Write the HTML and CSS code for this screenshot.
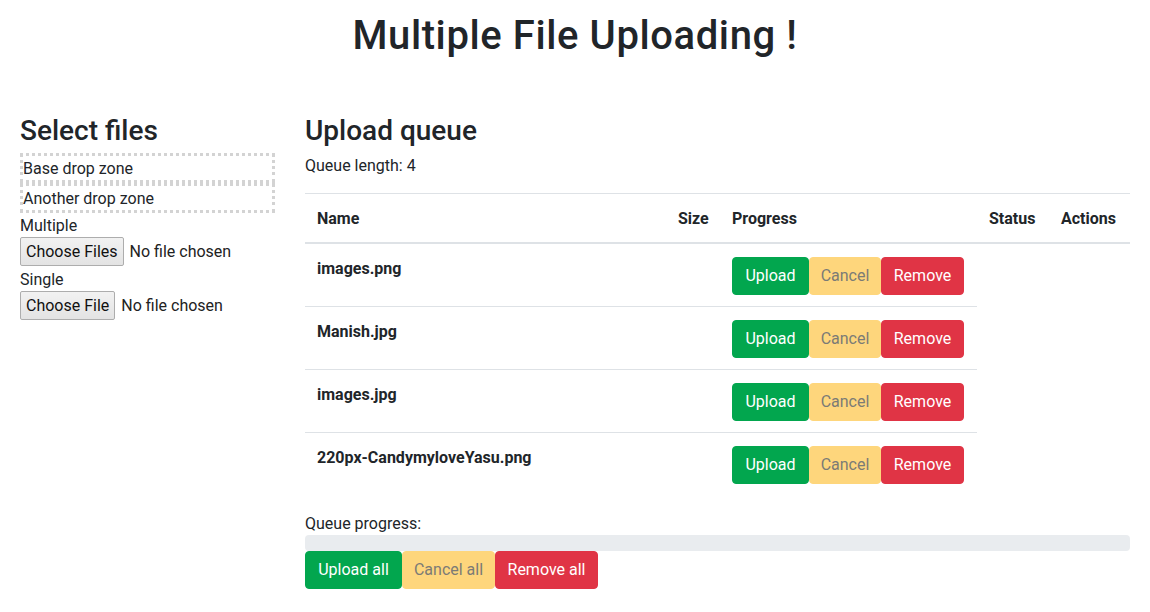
FILE: index.html
```html
<!DOCTYPE html>
<html lang="en">
<head>
<meta charset="utf-8">
<title>Multiple File Uploading</title>
<link rel="stylesheet" href="styles.css">
</head>
<body>
<div class="page">
  <h1 class="title">Multiple File Uploading !</h1>
  <div class="main">
    <section class="sidebar">
      <h3 class="section-title">Select files</h3>
      <div class="drop-zone">Base drop zone</div>
      <div class="drop-zone">Another drop zone</div>
      <div class="field-label">Multiple</div>
      <input type="file" multiple class="file-input">
      <div class="field-label">Single</div>
      <input type="file" class="file-input">
    </section>
    <section class="queue">
      <h3 class="section-title">Upload queue</h3>
      <p class="queue-length">Queue length: 4</p>
      <table class="queue-table">
        <colgroup>
          <col class="col-name">
          <col class="col-size">
          <col class="col-progress">
          <col class="col-status">
          <col class="col-actions">
        </colgroup>
        <thead>
          <tr>
            <th>Name</th>
            <th>Size</th>
            <th>Progress</th>
            <th>Status</th>
            <th>Actions</th>
          </tr>
        </thead>
        <tbody>
          <tr>
            <td class="file-name">images.png</td>
            <td></td>
            <td class="nowrap"><div class="btn-row"><button class="btn btn-success w-upload">Upload</button><button class="btn btn-warning w-cancel" disabled>Cancel</button><button class="btn btn-danger w-remove">Remove</button></div></td>
          </tr>
          <tr>
            <td class="file-name">Manish.jpg</td>
            <td></td>
            <td class="nowrap"><div class="btn-row"><button class="btn btn-success w-upload">Upload</button><button class="btn btn-warning w-cancel" disabled>Cancel</button><button class="btn btn-danger w-remove">Remove</button></div></td>
          </tr>
          <tr>
            <td class="file-name">images.jpg</td>
            <td></td>
            <td class="nowrap"><div class="btn-row"><button class="btn btn-success w-upload">Upload</button><button class="btn btn-warning w-cancel" disabled>Cancel</button><button class="btn btn-danger w-remove">Remove</button></div></td>
          </tr>
          <tr>
            <td class="file-name">220px-CandymyloveYasu.png</td>
            <td></td>
            <td class="nowrap"><div class="btn-row"><button class="btn btn-success w-upload">Upload</button><button class="btn btn-warning w-cancel" disabled>Cancel</button><button class="btn btn-danger w-remove">Remove</button></div></td>
          </tr>
        </tbody>
      </table>
      <div class="progress-label">Queue progress:</div>
      <div class="progress"><div class="progress-bar" style="width:0%"></div></div>
      <div class="btn-row"><button class="btn btn-success w-upload-all">Upload all</button><button class="btn btn-warning w-cancel-all" disabled>Cancel all</button><button class="btn btn-danger w-remove-all">Remove all</button></div>
    </section>
  </div>
</div>
</body>
</html>
```

FILE: styles.css
```css
* {
  box-sizing: border-box;
}

html, body {
  margin: 0;
  padding: 0;
  background: #fff;
}

body {
  font-family: Roboto, "Noto Sans", "Liberation Sans", sans-serif;
  font-size: 16px;
  line-height: 24px;
  color: #212529;
}

.page {
  padding: 0 20px;
}

.title {
  margin: 12px 0 0;
  font-size: 40px;
  line-height: 48px;
  font-weight: 500;
  letter-spacing: 0.6px;
  text-align: center;
}

.main {
  display: grid;
  grid-template-columns: 255px 1fr;
  column-gap: 30px;
  margin-top: 54px;
}

.section-title {
  margin: 0 0 5px;
  font-size: 28px;
  line-height: 34px;
  font-weight: 500;
}

.drop-zone {
  height: 30px;
  border: 3px dotted #d3d3d3;
  padding-top: 1px;
  line-height: 23px;
}

.field-label {
  height: 24px;
  padding-top: 1px;
}

.file-input {
  display: block;
  height: 29px;
  margin: 0 0 1px;
  padding: 0;
  font-family: inherit;
  font-size: 16px;
  color: #222;
}

.file-input::file-selector-button {
  height: 29px;
  margin: 0 6px 0 0;
  padding: 0 5px;
  border: 1px solid #adadad;
  border-radius: 2px;
  background: linear-gradient(#f2f2f2, #e3e3e3);
  color: #111;
  font-family: inherit;
  font-size: 16px;
}

.queue-length {
  margin: 0 0 16px;
  padding-top: 1px;
  height: 24px;
}

.queue-table {
  width: 100%;
  table-layout: fixed;
  border-collapse: collapse;
  margin-bottom: 16px;
}

.col-name { width: 361px; }
.col-size { width: 54px; }
.col-progress { width: 257px; }
.col-status { width: 72px; }
.col-actions { width: 81px; }

.queue-table th,
.queue-table td {
  padding: 13px 12px 11px;
  text-align: left;
  vertical-align: top;
  border-top: 1px solid #dee2e6;
}

.queue-table th {
  font-weight: 700;
  border-bottom: 2px solid #dee2e6;
}

.queue-table tbody tr:first-child td {
  border-top: 0;
}

.file-name {
  font-weight: 700;
}

.nowrap {
  white-space: nowrap;
}

.btn-row {
  display: flex;
}

.btn {
  display: inline-flex;
  align-items: center;
  justify-content: center;
  height: 38px;
  padding: 0 12px;
  margin: 0;
  border: 1px solid transparent;
  border-radius: 4px;
  font-family: inherit;
  font-size: 16px;
  line-height: 24px;
  white-space: nowrap;
}

.btn-success {
  background: #02a64e;
  border-color: #02a64e;
  color: #fff;
}

.btn-warning {
  background: #fed67c;
  border-color: #fed67c;
  color: #7b7b76;
}

.btn-danger {
  background: #e03445;
  border-color: #e03445;
  color: #fff;
}

.w-upload { width: 77px; }
.w-cancel { width: 72px; }
.w-remove { width: 83px; }
.w-upload-all { width: 97px; }
.w-cancel-all { width: 93px; }
.w-remove-all { width: 103px; }

.progress-label {
  height: 24px;
  padding-top: 1px;
}

.progress {
  height: 16px;
  background: #e9ecef;
  border-radius: 4px;
  overflow: hidden;
}

.progress-bar {
  height: 100%;
  background: #007bff;
}
```
